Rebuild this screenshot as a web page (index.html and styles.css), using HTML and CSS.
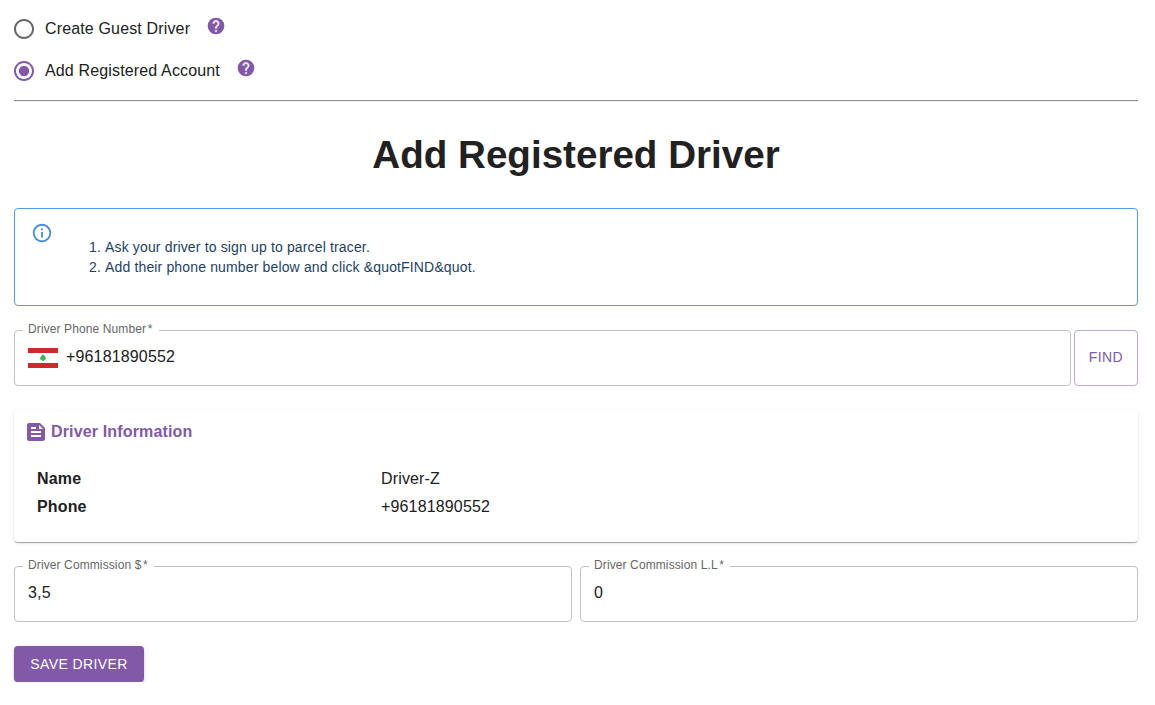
FILE: index.html
```html
<!DOCTYPE html>
<html lang="en">
<head>
<meta charset="utf-8">
<title>Add Registered Driver</title>
<link rel="stylesheet" href="styles.css">
</head>
<body>
<main class="page">
  <div class="options">
    <div class="option">
      <svg class="radio" viewBox="0 0 24 24"><path d="M12 2C6.48 2 2 6.48 2 12s4.48 10 10 10 10-4.48 10-10S17.52 2 12 2zm0 18c-4.42 0-8-3.58-8-8s3.58-8 8-8 8 3.58 8 8-3.58 8-8 8z"/></svg>
      <span class="option-label">Create Guest Driver</span>
      <svg class="help" viewBox="0 0 24 24"><circle cx="12" cy="12" r="10"/><path class="help-mark" d="M13 19h-2v-2h2v2zm2.07-7.75-.9.92C13.45 12.9 13 13.5 13 15h-2v-.5c0-1.1.45-2.1 1.17-2.83l1.24-1.26c.37-.36.59-.86.59-1.41 0-1.1-.9-2-2-2s-2 .9-2 2H8c0-2.21 1.79-4 4-4s4 1.79 4 4c0 .88-.36 1.68-.93 2.25z"/></svg>
    </div>
    <div class="option">
      <svg class="radio radio-on" viewBox="0 0 24 24"><path d="M12 2C6.48 2 2 6.48 2 12s4.48 10 10 10 10-4.48 10-10S17.52 2 12 2zm0 18c-4.42 0-8-3.58-8-8s3.58-8 8-8 8 3.58 8 8-3.58 8-8 8z"/><circle cx="12" cy="12" r="5.2"/></svg>
      <span class="option-label">Add Registered Account</span>
      <svg class="help" viewBox="0 0 24 24"><circle cx="12" cy="12" r="10"/><path class="help-mark" d="M13 19h-2v-2h2v2zm2.07-7.75-.9.92C13.45 12.9 13 13.5 13 15h-2v-.5c0-1.1.45-2.1 1.17-2.83l1.24-1.26c.37-.36.59-.86.59-1.41 0-1.1-.9-2-2-2s-2 .9-2 2H8c0-2.21 1.79-4 4-4s4 1.79 4 4c0 .88-.36 1.68-.93 2.25z"/></svg>
    </div>
  </div>
  <hr class="divider">
  <h1 class="title">Add Registered Driver</h1>
  <section class="alert">
    <svg class="alert-icon" viewBox="0 0 24 24"><path d="M11 7h2v2h-2zm0 4h2v6h-2zm1-9C6.48 2 2 6.48 2 12s4.48 10 10 10 10-4.48 10-10S17.52 2 12 2zm0 18c-4.41 0-8-3.59-8-8s3.59-8 8-8 8 3.59 8 8-3.59 8-8 8z"/></svg>
    <ol class="steps">
      <li>Ask your driver to sign up to parcel tracer.</li>
      <li>Add their phone number below and click &amp;quotFIND&amp;quot.</li>
    </ol>
  </section>
  <div class="find-row">
    <fieldset class="field">
      <legend class="legend legend-phone"><span>Driver Phone Number<i>*</i></span></legend>
      <div class="value">
        <svg class="flag" viewBox="0 0 30 20"><path fill="#fff" d="M0 0h30v20H0z"/><path fill="#cc2a2b" d="M0 0h30v5H0zM0 15h30v5H0z"/><path fill="#43b25b" d="M15 6.6l1.4 1 .9 1.4.9 1.4-1 1.4-1.2.3v1h-2v-1l-1.2-.3-1-1.4.9-1.4.9-1.4z"/></svg>
        <span>+96181890552</span>
      </div>
    </fieldset>
    <button class="find">FIND</button>
  </div>
  <section class="card">
    <h2 class="card-title">
      <svg class="doc" viewBox="0 0 24 24"><path d="M16 3H5c-1.1 0-2 .9-2 2v14c0 1.1.9 2 2 2h14c1.1 0 2-.9 2-2V8l-5-5zM7 7h5v2H7V7zm10 10H7v-2h10v2zm0-4H7v-2h10v2zm-2-4V5l4 4h-4z"/></svg>
      <span>Driver Information</span>
    </h2>
    <dl class="details">
      <dt>Name</dt><dd>Driver-Z</dd>
      <dt>Phone</dt><dd>+96181890552</dd>
    </dl>
  </section>
  <div class="commissions">
    <fieldset class="field">
      <legend class="legend legend-usd"><span>Driver Commission $<i>*</i></span></legend>
      <div class="value">3,5</div>
    </fieldset>
    <fieldset class="field">
      <legend class="legend legend-lira"><span>Driver Commission L.L<i>*</i></span></legend>
      <div class="value">0</div>
    </fieldset>
  </div>
  <button class="save">SAVE DRIVER</button>
</main>
</body>
</html>
```
FILE: styles.css
```css
* { box-sizing: border-box; }
body {
  margin: 0;
  background: #fff;
  color: #212121;
  font: 16px/24px "Liberation Sans", Arial, sans-serif;
  letter-spacing: 0.15px;
}
svg { display: block; flex: none; }
.page { padding: 8px 17px 0 14px; }
.option { display: flex; align-items: center; height: 42px; }
.radio { width: 24px; height: 24px; margin-left: -2px; fill: #666; }
.radio-on, .help { fill: #8159a8; }
.option-label { margin-left: 9px; }
.help { width: 20px; height: 20px; margin: 0 0 6px 16px; }
.help-mark { fill: #f6f1fa; stroke: #f6f1fa; stroke-width: 0.4; }
.divider { height: 2px; margin: 8px 0 0; border: 0; border-top: 1px solid #949494; border-bottom: 1px solid #ededed; }
.title { margin: 29px 0; font-size: 38.6px; line-height: 48px; letter-spacing: 0; text-align: center; }
.alert {
  display: flex;
  height: 98px;
  padding: 13px 18px;
  border: 1px solid #4e9de9;
  border-radius: 4px;
  color: #1e3f62;
  font-size: 14px;
  line-height: 20px;
}
.alert-icon { width: 22px; height: 22px; margin-left: -2px; fill: #4e8bdb; }
.steps { margin: 15px 0 0 12px; padding: 0 0 0 40px; }
.find-row { display: flex; gap: 3px; margin-top: 19px; align-items: flex-end; }
.field {
  flex: 1;
  min-width: 0;
  height: 61px;
  margin: 0;
  padding: 0 13px 0 8px;
  border: 1px solid #c2c2c2;
  border-radius: 4px;
}
.legend {
  height: 11px;
  padding: 0 5px;
  color: #666;
  font-size: 12px;
  line-height: 9px;
  letter-spacing: 0.11px;
  white-space: nowrap;
}
.legend i { margin-left: 1.5px; font-style: normal; }
.legend-phone { width: 136px; }
.legend-usd { width: 131px; }
.legend-lira { width: 141px; }
.value { display: flex; align-items: center; gap: 8px; height: 24px; margin: 9px 0 0 5px; }
.flag { width: 30px; height: 20px; margin-top: 2px; }
.find {
  width: 64px;
  height: 56px;
  padding: 0 0 2px;
  border: 1px solid #bfa9d4;
  border-radius: 4px;
  background: #fff;
  color: #8159a8;
  font: 14px/24px "Liberation Sans", Arial, sans-serif;
  letter-spacing: 0.4px;
}
.card {
  height: 132px;
  margin: 24px 0 19px;
  padding: 10px 11px;
  border-radius: 4px;
  box-shadow: 0 2px 1px -1px rgba(0,0,0,.2), 0 1px 1px rgba(0,0,0,.14), 0 1px 3px rgba(0,0,0,.12);
}
.card-title { display: flex; align-items: center; gap: 3px; margin: 0; color: #8159a8; font-size: 16px; line-height: 24px; }
.doc { width: 24px; height: 24px; margin-left: -1px; fill: #8159a8; }
.details { display: grid; grid-template-columns: 344px 1fr; grid-auto-rows: 28px; margin: 21px 0 0 12px; line-height: 28px; }
.details dt { font-weight: bold; }
.details dd { margin: 0; }
.commissions { display: flex; gap: 8px; }
.save {
  display: block;
  width: 130px;
  height: 36px;
  margin-top: 24px;
  padding: 0;
  border: 0;
  border-radius: 4px;
  background: #8159a8;
  color: #fff;
  box-shadow: 0 3px 1px -2px rgba(0,0,0,.2), 0 2px 2px rgba(0,0,0,.14), 0 1px 5px rgba(0,0,0,.12);
  font: 14px/24px "Liberation Sans", Arial, sans-serif;
  letter-spacing: 0.4px;
}
```
